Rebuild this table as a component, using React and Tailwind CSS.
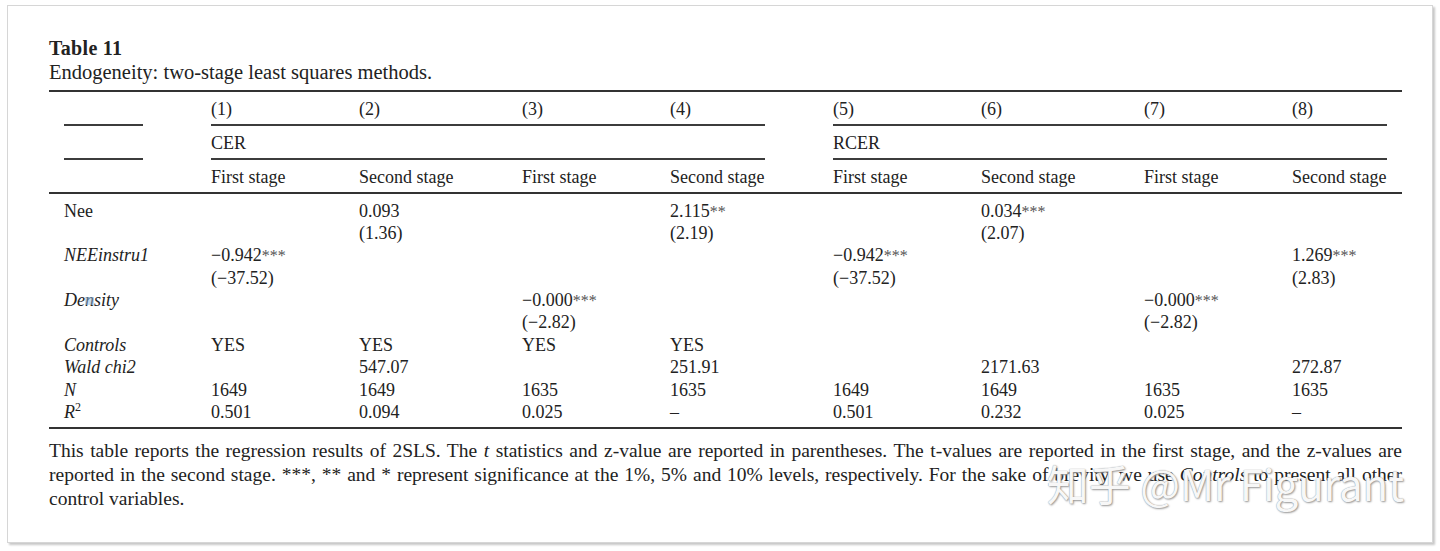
import React from "react";

/* ---------------------------------------------------
    DATA
----------------------------------------------------*/
const colTemplate =
  "grid grid-cols-[162px_148px_163px_148px_163px_148px_163px_148px_110px]";

const stages = [
  "First stage",
  "Second stage",
  "First stage",
  "Second stage",
  "First stage",
  "Second stage",
  "First stage",
  "Second stage",
];

// each row: label, italic?, cells -> 8 entries (string or [coef, t])
const rows = [
  {
    label: "Nee",
    italic: false,
    cells: ["", ["0.093", "(1.36)"], "", ["2.115**", "(2.19)"], "", ["0.034***", "(2.07)"], "", ""],
  },
  {
    label: "NEEinstru1",
    italic: true,
    cells: [["−0.942***", "(−37.52)"], "", "", "", ["−0.942***", "(−37.52)"], "", "", ["1.269***", "(2.83)"]],
  },
  {
    label: "Density",
    italic: true,
    cells: ["", "", ["−0.000***", "(−2.82)"], "", "", "", ["−0.000***", "(−2.82)"], ""],
  },
  { label: "Controls", italic: true, cells: ["YES", "YES", "YES", "YES", "", "", "", ""] },
  { label: "Wald chi2", italic: true, cells: ["", "547.07", "", "251.91", "", "2171.63", "", "272.87"] },
  { label: "N", italic: true, cells: ["1649", "1649", "1635", "1635", "1649", "1649", "1635", "1635"] },
  { label: "R2", italic: true, cells: ["0.501", "0.094", "0.025", "–", "0.501", "0.232", "0.025", "–"] },
];

/* ---------------------------------------------------
    SMALL PIECES
----------------------------------------------------*/
const LineRow = () => (
  <div className={colTemplate}>
    <div className="ml-[15px] w-[79px] h-[2px] bg-[#3c3c3c]" />
    <div className="col-span-4 mr-[68px] h-[2px] bg-[#3c3c3c]" />
    <div className="col-span-4 mr-[15px] h-[2px] bg-[#3c3c3c]" />
  </div>
);

// coefficient with lighter, smaller stars
const Coef = ({ text }) => {
  const m = text.match(/^(.*?)(\*+)$/);
  if (!m) return <span>{text}</span>;
  return (
    <span>
      {m[1]}
      <span className="text-[16px] text-[#555]">{m[2]}</span>
    </span>
  );
};

const Label = ({ row }) => {
  if (row.label === "R2")
    return (
      <span>
        <i>R</i>
        <span className="text-[12px] relative -top-[7px]">2</span>
      </span>
    );
  if (row.label === "Density")
    return (
      <i>
        De
        <span className="relative">
          n
          <span className="absolute left-0 right-0 bottom-[5px] h-[8px] bg-[#8fb8e0]/50" />
        </span>
        sity
      </i>
    );
  return row.italic ? <i>{row.label}</i> : <span>{row.label}</span>;
};

/* ---------------------------------------------------
    MAIN
----------------------------------------------------*/
export default function App() {
  return (
    <div className="w-[1440px] h-[551px] bg-white overflow-hidden">
      <div
        className="relative ml-[7px] mt-[5px] w-[1426px] h-[538px] bg-white border border-[#d6d6d6] shadow-[2px_2px_2px_rgba(0,0,0,0.22)] pl-[41px] pr-[30px] pt-[30px] text-[#222]"
        style={{ fontFamily: '"Liberation Serif", "Times New Roman", serif' }}
      >
        {/* TITLE */}
        <div className="text-[20px] font-bold leading-[24px] tracking-[0.3px]">Table 11</div>
        <div className="text-[20.5px] leading-[25px]">
          Endogeneity: two-stage least squares methods.
        </div>

        <div className="mt-[5px] h-[2px] bg-[#333]" />

        {/* HEADER */}
        <div className="text-[18px]">
          <div className={colTemplate}>
            <div />
            {["(1)", "(2)", "(3)", "(4)", "(5)", "(6)", "(7)", "(8)"].map((c) => (
              <div key={c} className="h-[32px] flex items-center pt-[2px]">
                {c}
              </div>
            ))}
          </div>
          <LineRow />
          <div className={colTemplate}>
            <div />
            <div className="col-span-4 h-[32px] flex items-center pt-[2px]">CER</div>
            <div className="col-span-4 h-[32px] flex items-center pt-[2px]">RCER</div>
          </div>
          <LineRow />
          <div className={colTemplate}>
            <div />
            {stages.map((s, i) => (
              <div key={i} className="h-[32px] flex items-center pt-[2px] whitespace-nowrap">
                {s}
              </div>
            ))}
          </div>
        </div>

        <div className="h-[1.5px] bg-[#333]" />

        {/* BODY */}
        <div className={`${colTemplate} text-[18px] leading-[22.4px] pt-[6px] pb-[4px]`}>
          {rows.map((row) => (
            <React.Fragment key={row.label}>
              <div className="pl-[15px] h-[22.4px]">
                <Label row={row} />
              </div>
              {row.cells.map((c, i) => (
                <div key={i} className="whitespace-nowrap">
                  {Array.isArray(c) ? (
                    <>
                      <div className="h-[22.4px]">
                        <Coef text={c[0]} />
                      </div>
                      <div className="h-[22.4px]">{c[1]}</div>
                    </>
                  ) : (
                    <div className="h-[22.4px]">{c}</div>
                  )}
                </div>
              ))}
            </React.Fragment>
          ))}
        </div>

        <div className="h-[2px] bg-[#333]" />

        {/* NOTE */}
        <div className="mt-[10px] text-[19.5px] leading-[24px]">
          <div className="text-justify [text-align-last:justify] whitespace-nowrap">
            This table reports the regression results of 2SLS. The <i>t</i> statistics and z-value are
            reported in parentheses. The t-values are reported in the first stage, and the z-values are
          </div>
          <div className="text-justify [text-align-last:justify] whitespace-nowrap">
            reported in the second stage. ***, ** and * represent significance at the 1%, 5% and 10%
            levels, respectively. For the sake of brevity, we use <i>Controls</i> to present all other
          </div>
          <div>control variables.</div>
        </div>

        {/* WATERMARK */}
        <div
          className="absolute right-[28px] top-[452px] text-[42px] leading-[50px] whitespace-nowrap text-[#f7f7f7] [text-shadow:0_0_1px_#8a8a8a,1px_1px_2px_#9a9a9a]"
          style={{ fontFamily: '"Noto Sans CJK SC", "Noto Sans", sans-serif' }}
        >
          知乎 @Mr Figurant
        </div>
      </div>
    </div>
  );
}
